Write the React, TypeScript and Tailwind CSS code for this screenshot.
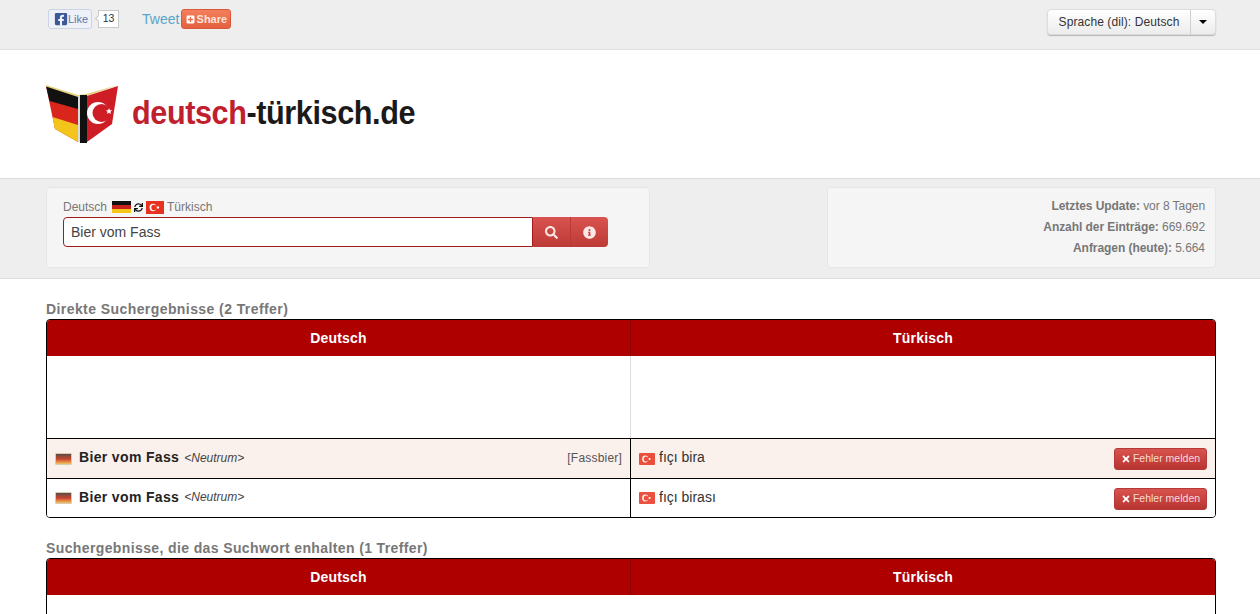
import { FaSearch, FaInfoCircle, FaTimes, FaSync, FaPlusSquare, FaFacebookSquare } from 'react-icons/fa'

function GermanFlag({ className }: { className: string }) {
  return (
    <span className={`inline-flex flex-col shrink-0 ${className}`}>
      <span className="flex-1 bg-[#111]" />
      <span className="flex-1 bg-[#c8201c]" />
      <span className="flex-1 bg-[#f5c518]" />
    </span>
  )
}

function TurkishFlag({ className }: { className: string }) {
  return (
    <svg viewBox="0 0 18 12" preserveAspectRatio="none" className={`shrink-0 ${className}`}>
      <rect width="18" height="12" fill="#e8321f" />
      <circle cx="7" cy="6" r="3.4" fill="#fff" />
      <circle cx="7.9" cy="6" r="2.6" fill="#e8321f" />
      <circle cx="12" cy="6" r="1.1" fill="#fff" />
    </svg>
  )
}

function BlurredGermanFlag() {
  return <span className="w-[17px] h-[12px] shrink-0 rounded-[1px] border border-[#d9c9b0] bg-gradient-to-b from-[#5a4a44] via-[#c8402c] to-[#f0c060]" />
}

function BlurredTurkishFlag() {
  return <TurkishFlag className="w-4 h-[12px] rounded-[1px] opacity-85" />
}

function Logo() {
  return (
    <svg viewBox="0 0 74 60" className="w-[74px] h-[60px] shrink-0">
      <path d="M0 2 L32 12 L32 58 L9 45 Z" fill="#d8261c" />
      <path d="M0 2 L32 12 L32 25 L3.5 17 Z" fill="#111" />
      <path d="M6.5 33 L32 41 L32 58 L9 45 Z" fill="#f3c41c" />
      <path d="M0 1 L32 11 L40 10 L72 1 L41 12 L32 13 L0 2.5 Z" fill="#e8d27a" />
      <rect x="32" y="12" width="2" height="46" fill="#d9d9d9" />
      <rect x="34" y="11" width="7" height="48" fill="#111" />
      <path d="M41 12 L72 2 L66 40 L41 58 Z" fill="#cf1d26" />
      <circle cx="52" cy="29" r="11" fill="#fff" />
      <circle cx="55.5" cy="29" r="9" fill="#cf1d26" />
      <path d="M63 24l.9 2.3 2.4-.1-1.9 1.5.6 2.3-2-1.3-2 1.3.6-2.3-1.9-1.5 2.4.1z" fill="#fff" />
    </svg>
  )
}

function ReportButton() {
  return (
    <button className="ml-auto mt-px h-[22px] w-[93px] shrink-0 flex items-center justify-center gap-[2px] rounded-[3px] border border-[#b53a38] bg-gradient-to-b from-[#d9534f] to-[#b83431] text-[10.5px] text-[#f6dcdb]">
      <FaTimes className="w-[10px] h-[10px] text-white" />
      Fehler melden
    </button>
  )
}

function TableHead() {
  return (
    <div className="grid grid-cols-2 h-[36px] bg-[#af0000] text-white text-sm font-bold tracking-[0.2px]">
      <div className="flex items-center justify-center border-r border-[#8c0000]">Deutsch</div>
      <div className="flex items-center justify-center">Türkisch</div>
    </div>
  )
}

function ResultRow({ tinted, note, turkish, last }: { tinted?: boolean; note?: string; turkish: string; last?: boolean }) {
  return (
    <div className={`grid grid-cols-2 border-t border-black ${last ? 'h-[39px]' : 'h-[40px]'} ${tinted ? 'bg-[#fbf1ec]' : 'bg-white'}`}>
      <div className="flex items-center pl-2 pr-2 border-r border-black">
        <BlurredGermanFlag />
        <span className="ml-[7px] pb-[2px] text-[14px] font-bold text-[#222] tracking-[0.35px]">Bier vom Fass</span>
        <span className="ml-[5px] pb-[2px] text-xs italic text-[#444]">&lt;Neutrum&gt;</span>
        {note && <span className="ml-auto pb-[2px] text-xs tracking-[0.2px] text-[#555]">{note}</span>}
      </div>
      <div className="flex items-center pl-2 pr-2">
        <BlurredTurkishFlag />
        <span className="ml-1 pb-[2px] text-[14px] text-[#333]">{turkish}</span>
        <ReportButton />
      </div>
    </div>
  )
}

export default function App() {
  return (
    <div className="h-[614px] overflow-hidden bg-white font-['Liberation_Sans',Arial,sans-serif] text-[#555]">
      <div className="h-[50px] bg-[#eeeeee] border-b border-[#e0e0e0] pl-[48px] pr-[44px] flex items-start justify-between">
        <div className="flex items-start pt-[9px]">
          <div className="flex items-center h-[20px] w-[44px] pl-[5px] rounded-[3px] border border-[#cad4e7] bg-[#eef1f8] text-[11px]">
            <FaFacebookSquare className="w-[14px] h-[14px] text-[#3b5998]" />
            <span className="text-[#5f78ab]">Like</span>
          </div>
          <div className="relative ml-[6px] flex items-center justify-center h-[18px] w-[21px] mt-px border border-[#c8c8c8] bg-white text-[10.5px] text-[#333]">
            13
            <span className="absolute -left-[3px] top-[5px] w-[5px] h-[5px] rotate-45 border-l border-b border-[#c8c8c8] bg-white" />
          </div>
          <span className="ml-[23px] text-sm text-[#5ba4c9] leading-[20px]">Tweet</span>
          <div className="ml-[2px] flex items-center justify-center gap-[2px] h-[20px] w-[50px] rounded-[3px] border border-[#d9583a] bg-gradient-to-b from-[#f47f5c] to-[#e2603f] text-[11px] font-bold text-[#fde3da]">
            <FaPlusSquare className="w-[9px] h-[9px] text-white" />
            Share
          </div>
        </div>
        <div className="mt-[9px] flex h-[26px] w-[169px] rounded-[4px] border border-[#dcdcdc] bg-gradient-to-b from-white to-[#ececec] shadow-[0_1px_1px_rgba(0,0,0,0.25)] text-xs text-[#333]">
          <div className="flex-1 flex items-center justify-center tracking-[0.1px] border-r border-[#cfcfcf]">Sprache (dil): Deutsch</div>
          <div className="w-[24px] flex items-center justify-center">
            <span className="border-x-[4px] border-t-[4px] border-x-transparent border-t-black" />
          </div>
        </div>
      </div>

      <div className="h-[129px] pl-[46px] pt-[34px] flex items-start border-b border-[#dddddd]">
        <Logo />
        <div className="ml-[12px] mt-[6px] text-[34px] leading-[44px] font-bold tracking-[-0.45px] scale-x-[0.9] origin-left">
          <span className="text-[#c0202e]">deutsch</span>
          <span className="text-[#1a1a1a]">-türkisch.de</span>
        </div>
      </div>

      <div className="h-[100px] bg-[#eeeeee] border-b border-[#dddddd] pl-[46px] pr-[44px] pt-[8px] flex justify-between items-start">
        <div className="w-[604px] h-[81px] rounded-[3px] border border-[#e6e6e6] bg-[#f5f5f5] pl-[16px] pt-[12px]">
          <div className="flex items-center h-[14px] text-xs text-[#777]">
            Deutsch
            <GermanFlag className="ml-[5px] w-[19px] h-[13px]" />
            <FaSync className="mx-[3px] w-[9px] h-[9px] text-[#111]" />
            <TurkishFlag className="w-[18px] h-[13px]" />
            <span className="ml-[3px]">Türkisch</span>
          </div>
          <div className="flex mt-[3px]">
            <div className="w-[470px] h-[30px] rounded-l-[4px] border border-[#a01c1c] bg-white pl-[7px] flex items-center text-sm text-[#444]">Bier vom Fass</div>
            <div className="w-[38px] h-[30px] flex items-center justify-center border-r border-[#b53a38] bg-gradient-to-b from-[#d9534f] to-[#bd3a36]">
              <FaSearch className="w-[13px] h-[13px] text-[#fbe8e7]" />
            </div>
            <div className="w-[37px] h-[30px] rounded-r-[4px] flex items-center justify-center bg-gradient-to-b from-[#d9534f] to-[#bd3a36]">
              <FaInfoCircle className="w-[13px] h-[13px] text-[#fbe8e7]" />
            </div>
          </div>
        </div>
        <div className="w-[389px] h-[81px] rounded-[3px] border border-[#e6e6e6] bg-[#f5f5f5] pr-[10px] pt-[8px] text-right text-xs leading-[21px] tracking-[-0.06px] text-[#777]">
          <div><b>Letztes Update:</b> vor 8 Tagen</div>
          <div><b>Anzahl der Einträge:</b> 669.692</div>
          <div><b>Anfragen (heute):</b> 5.664</div>
        </div>
      </div>

      <div className="pl-[46px] pr-[44px]">
        <h2 className="mt-[21px] mb-px h-[18px] text-sm leading-[18px] font-bold text-[#777] tracking-[0.42px]">Direkte Suchergebnisse (2 Treffer)</h2>
        <div className="rounded-[4px] overflow-hidden border border-black">
          <TableHead />
          <div className="grid grid-cols-2 h-[82px]">
            <div className="border-r border-[#dddddd]" />
            <div />
          </div>
          <ResultRow tinted note="[Fassbier]" turkish="fıçı bira" />
          <ResultRow turkish="fıçı birası" last />
        </div>

        <h2 className="mt-[21px] mb-px h-[18px] text-sm leading-[18px] font-bold text-[#777] tracking-[0.38px]">Suchergebnisse, die das Suchwort enhalten (1 Treffer)</h2>
        <div className="rounded-[4px] overflow-hidden border border-black">
          <TableHead />
          <div className="h-[60px]" />
        </div>
      </div>
    </div>
  )
}
